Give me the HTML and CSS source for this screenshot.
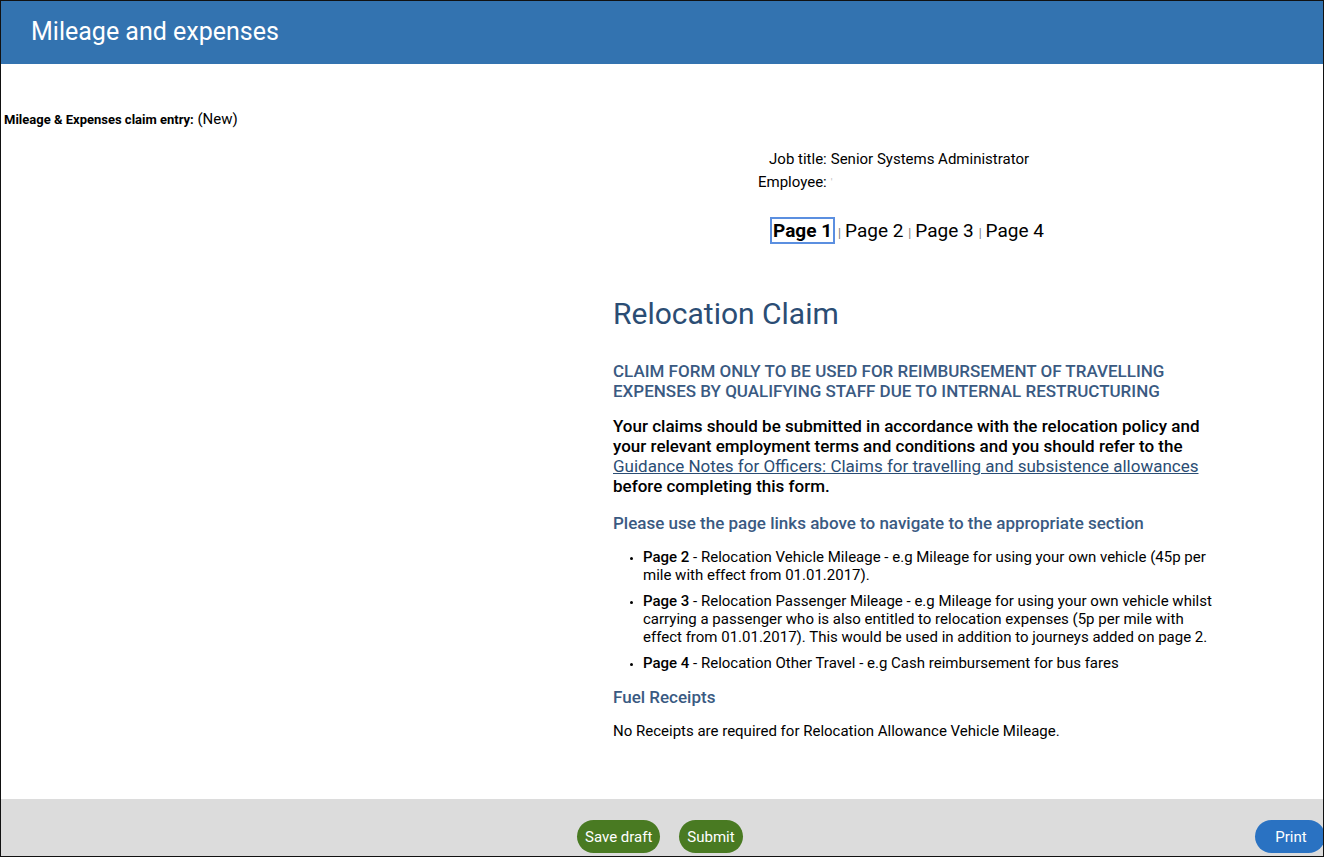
FILE: index.html
```html
<!DOCTYPE html>
<html lang="en">
<head>
    <meta charset="UTF-8">
    <meta name="viewport" content="width=device-width, initial-scale=1.0">
    <title>Mileage and expenses</title>
    <link rel="stylesheet" href="styles.css">
</head>
<body>
    <div class="frame">
        <header class="topbar">
            <h1>Mileage and expenses</h1>
        </header>

        <main class="content">
            <p class="entry"><b>Mileage &amp; Expenses claim entry:</b> (New)</p>

            <div class="columns">
                <div class="side"></div>
                <div class="main-col">
                    <table class="employee">
                        <tr>
                            <td class="label">Job title:</td>
                            <td>Senior Systems Administrator</td>
                        </tr>
                        <tr>
                            <td class="label">Employee:</td>
                            <td><span class="redacted">'</span></td>
                        </tr>
                    </table>

                    <nav class="pages">
                        <a href="#" class="current">Page 1</a><span class="sep">|</span><a href="#">Page 2</a><span class="sep">|</span><a href="#">Page 3</a><span class="sep">|</span><a href="#">Page 4</a>
                    </nav>

                    <h2>Relocation Claim</h2>

                    <p class="notice">CLAIM FORM ONLY TO BE USED FOR REIMBURSEMENT OF TRAVELLING EXPENSES BY QUALIFYING STAFF DUE TO INTERNAL RESTRUCTURING</p>

                    <p class="policy">Your claims should be submitted in accordance with the relocation policy and your relevant employment terms and conditions and you should refer to the <a href="#">Guidance Notes for Officers: Claims for travelling and subsistence allowances</a> before completing this form.</p>

                    <h3>Please use the page links above to navigate to the appropriate section</h3>

                    <ul class="sections">
                        <li><b>Page 2</b> - Relocation Vehicle Mileage - e.g Mileage for using your own vehicle (45p per mile with effect from 01.01.2017).</li>
                        <li><b>Page 3</b> - Relocation Passenger Mileage - e.g Mileage for using your own vehicle whilst carrying a passenger who is also entitled to relocation expenses (5p per mile with effect from 01.01.2017). This would be used in addition to journeys added on page 2.</li>
                        <li><b>Page 4</b> - Relocation Other Travel - e.g Cash reimbursement for bus fares</li>
                    </ul>

                    <h3 class="fuel">Fuel Receipts</h3>
                    <p class="plain">No Receipts are required for Relocation Allowance Vehicle Mileage.</p>
                </div>
            </div>
        </main>

        <footer class="actions">
            <div class="left-buttons">
                <button class="btn green">Save draft</button>
                <button class="btn green">Submit</button>
            </div>
            <button class="btn blue">Print</button>
        </footer>
    </div>
</body>
</html>
```

FILE: styles.css
```css
html, body {
    margin: 0;
    padding: 0;
}
body {
    font-family: Roboto, "Liberation Sans", Arial, sans-serif;
    color: #000;
    background: #fff;
}
.frame {
    box-sizing: border-box;
    height: 857px;
    border: 1px solid #111;
    display: flex;
    flex-direction: column;
    overflow: hidden;
}
.topbar {
    background-color: #3373b0;
    height: 63px;
    flex-shrink: 0;
    display: flex;
    align-items: center;
    padding-left: 30px;
}
.topbar h1 {
    margin: 0;
    color: #fff;
    font-size: 25px;
    font-weight: 400;
    line-height: 30px;
    padding-bottom: 1px;
}
.content {
    flex: 1;
}
.entry {
    margin: 46px 0 0 3px;
    font-size: 15px;
    line-height: 18px;
}
.entry b {
    font-size: 13px;
}
.columns {
    display: flex;
}
.side {
    width: 612px;
    flex-shrink: 0;
}
.main-col {
    width: 600px;
}
.employee {
    border-collapse: collapse;
    margin: 18px 0 0 143px;
    font-size: 15px;
}
.employee td {
    padding: 0 2px;
    height: 23px;
    line-height: 18px;
}
.employee .label {
    text-align: right;
}
.redacted {
    color: #bbb;
    font-size: 10px;
}
.pages {
    margin: 26px 0 0 159px;
    font-size: 19px;
    line-height: 24px;
    height: 24px;
}
.pages a {
    color: #000;
    text-decoration: none;
}
.pages a.current {
    font-weight: bold;
    outline: 2px solid #5b8fe0;
    outline-offset: 0;
    padding: 0 1px;
}
.pages .sep {
    color: #777;
    font-size: 12px;
    margin: 0 4px 0 5px;
}
h2 {
    margin: 54px 0 0;
    font-size: 30px;
    font-weight: 400;
    line-height: 34px;
    color: #2b4d74;
}
.notice {
    margin: 30px 0 0;
    font-size: 17px;
    font-weight: 500;
    line-height: 20px;
    color: #3a5a82;
}
.policy {
    margin: 15px 0 0;
    font-size: 17px;
    font-weight: 500;
    line-height: 20px;
}
.policy a {
    color: #2b4d74;
    font-weight: 400;
}
h3 {
    margin: 17px 0 0;
    font-size: 17px;
    font-weight: 500;
    line-height: 20px;
    color: #3a5a82;
}
.sections {
    margin: 15px 0 0;
    padding-left: 30px;
    font-size: 15px;
    line-height: 18px;
    list-style: disc;
}
.sections li {
    margin-bottom: 8px;
}
.sections li::marker {
    font-size: 10px;
}
.sections b {
    font-weight: 500;
}
h3.fuel {
    margin-top: 15px;
}
.plain {
    margin: 15px 0 0;
    font-size: 15px;
    line-height: 18px;
}
.actions {
    height: 57px;
    background-color: #dcdcdc;
    flex-shrink: 0;
    display: flex;
    align-items: flex-end;
    justify-content: space-between;
    padding-bottom: 3px;
    box-sizing: border-box;
}
.left-buttons {
    display: flex;
    gap: 19px;
    margin-left: 576px;
}
.btn {
    border: none;
    border-radius: 17px;
    height: 33px;
    padding: 0 8px;
    font-family: Roboto, "Liberation Sans", Arial, sans-serif;
    font-size: 15px;
    color: #fff;
    cursor: pointer;
}
.btn.green {
    background-color: #497a22;
}
.btn.blue {
    background-color: #2a72c2;
    width: 70px;
    margin-right: -2px;
    text-align: center;
    padding: 0 0 0 2px;
}
```
